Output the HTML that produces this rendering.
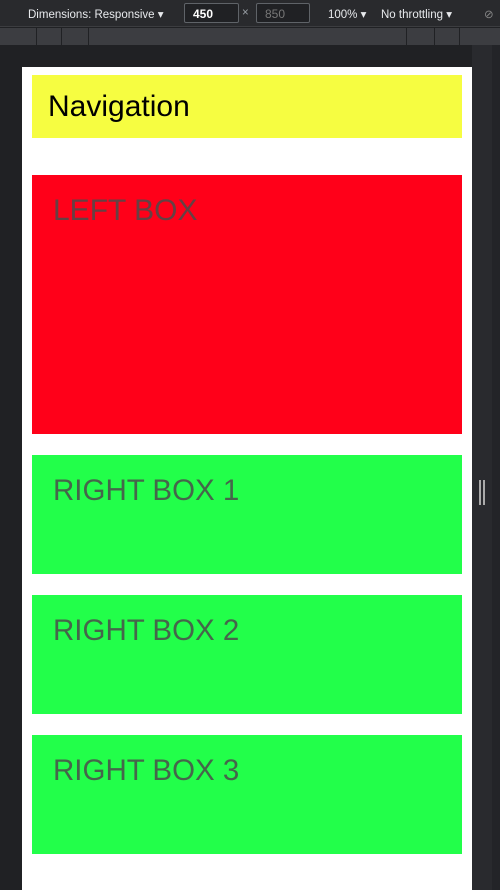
<!DOCTYPE html>
<html><head><style>
*{margin:0;padding:0;box-sizing:border-box}
body{width:500px;height:890px;background:#202124;position:relative;overflow:hidden;font-family:"Liberation Sans",sans-serif}
.tb{position:absolute;left:0;top:0;width:500px;height:27px;background:#292a2d;border-bottom:1px solid #3c3d40;color:#e8eaed;font-size:11.5px}
.tb span{position:absolute;top:7px}
.inp{position:absolute;top:3px;height:20px;border:1px solid #5f6368;border-radius:2px;background:#202124;font-size:12px;padding:3px 8px}
.rb{position:absolute;left:0;top:28px;width:500px;height:17px;background:#3c3d41}
.rb i{position:absolute;top:0;width:1px;height:17px;background:#202124}
.page{position:absolute;left:22px;top:67px;width:450px;height:823px;background:#fff}
.box{position:absolute;left:10px;width:430px}
.nav{top:8px;height:63px;background:#f6fd41;font-size:30px;padding:15px 0 0 16px;color:#000}
.t{font-size:29.5px;color:rgba(75,75,75,.85);padding:19px 0 0 21px}
.red{background:#ff0019;font-size:30px}
.grn{background:#22ff4a}
.sr{position:absolute;left:472px;top:45px;width:20px;height:845px;background:#292a2e}
.sr2{position:absolute;left:492px;top:45px;width:8px;height:845px;background:#232428}
</style></head><body>
<div class="tb">
<span style="left:28px">Dimensions: Responsive ▾</span>
<div class="inp" style="left:184px;width:55px;font-weight:bold;color:#fff">450</div>
<span style="left:242px;color:#9aa0a6">×</span>
<div class="inp" style="left:256px;width:54px;color:#777">850</div>
<span style="left:328px">100% ▾</span>
<span style="left:381px">No throttling ▾</span>
<span style="left:484px;color:#888">⊘</span>
</div>
<div class="rb"><i style="left:36px"></i><i style="left:61px"></i><i style="left:88px"></i><i style="left:406px"></i><i style="left:434px"></i><i style="left:459px"></i></div>
<div class="sr"></div><div class="sr2"></div>
<div style="position:absolute;left:479px;top:480px;width:2px;height:25px;background:#aaa"></div>
<div style="position:absolute;left:483px;top:480px;width:2px;height:25px;background:#aaa"></div>
<div class="page">
<div class="box nav">Navigation</div>
<div class="box red t" style="top:108px;height:259px">LEFT BOX</div>
<div class="box grn t" style="top:388px;height:119px">RIGHT BOX 1</div>
<div class="box grn t" style="top:528px;height:119px">RIGHT BOX 2</div>
<div class="box grn t" style="top:668px;height:119px">RIGHT BOX 3</div>
</div>
</body></html>
